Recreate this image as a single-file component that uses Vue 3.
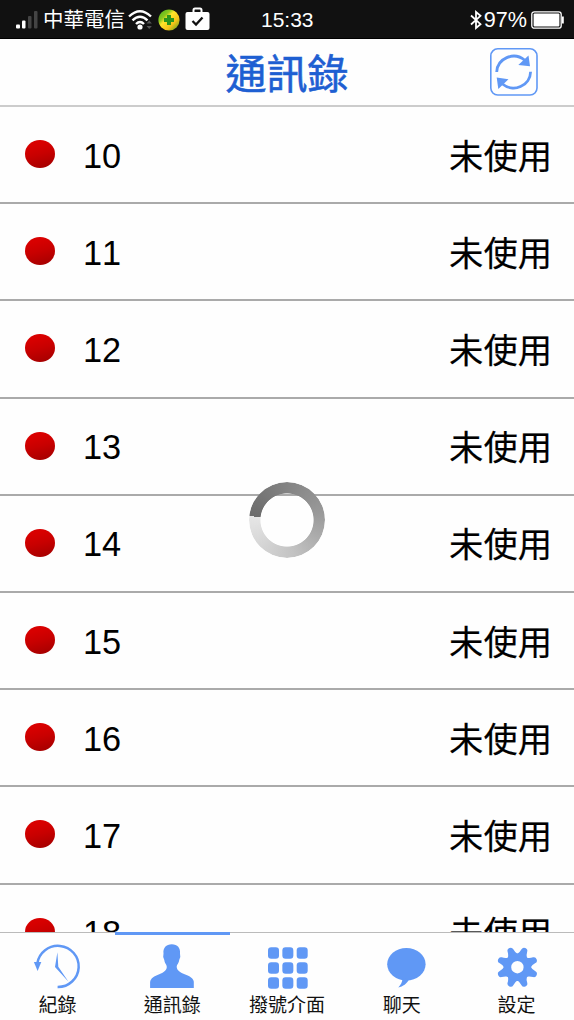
<template>
  <div class="phone">
    <div class="status">
      <svg class="signal" width="22" height="20" viewBox="0 0 22 20">
        <rect x="0" y="14.5" width="4" height="4" rx="1" fill="#fff" />
        <rect x="6" y="10.5" width="3.5" height="8" rx="1" fill="#fff" />
        <rect x="12" y="6" width="3.5" height="12.5" rx="1" fill="#444" />
        <rect x="18" y="1" width="3.5" height="17.5" rx="1" fill="#444" />
      </svg>
      <span class="carrier">中華電信</span>
      <svg class="wifi" width="26" height="22" viewBox="0 0 26 22">
        <g fill="none" stroke="#fff" stroke-width="2.4">
          <path d="M1 7.5Q12-3 23 7.5" />
          <path d="M4.5 11.4Q12 4 19.5 11.4" />
          <path d="M8 15Q12 11 16 15" />
        </g>
        <circle cx="12" cy="18" r="2.6" fill="#fff" />
        <path d="M18.500 14.500L21.200 11.500L23.900 14.500ZM18.500 17L21.200 20L23.900 17Z" fill="#555" />
      </svg>
      <svg class="shield" width="22" height="22" viewBox="0 0 22 22">
        <defs>
          <linearGradient id="ball" x1="0" y1="0" x2="1" y2="1">
            <stop offset="0" stop-color="#3fae1c" />
            <stop offset=".3" stop-color="#8cc81e" />
            <stop offset=".42" stop-color="#ffe52a" />
            <stop offset=".68" stop-color="#f6c318" />
            <stop offset="1" stop-color="#3c9f1c" />
          </linearGradient>
        </defs>
        <circle cx="11" cy="11" r="10.6" fill="url(#ball)" />
        <path d="M9 6h4v3h3v4h-3v3h-4v-3h-3v-4h3z" fill="#2c961b" />
      </svg>
      <svg class="bag" width="25" height="24" viewBox="0 0 25 24">
        <rect x=".5" y="5" width="24" height="18" rx="2" fill="#fff" />
        <path d="M8.5 6V3.2Q8.5 1.5 10 1.5H15Q16.5 1.5 16.5 3.2V6" fill="none" stroke="#fff" stroke-width="2" />
        <path d="M7.5 14L11 17.5L17.5 10.5" fill="none" stroke="#111" stroke-width="2.3" />
      </svg>
      <span class="clock">15:33</span>
      <div class="power">
        <svg width="12" height="20" viewBox="0 0 12 20">
          <path d="M1 5.5L10.5 14.2L6 18V2L10.5 5.8L1 14.5" fill="none" stroke="#fff" stroke-width="1.8" />
        </svg>
        <span class="percent">97%</span>
        <svg width="33" height="18" viewBox="0 0 33 18">
          <rect x=".8" y=".8" width="29.4" height="16.4" rx="2.5" fill="none" stroke="#fff" stroke-width="1.3" />
          <rect x="2.6" y="2.6" width="25.8" height="12.8" rx="1" fill="#fff" />
          <path d="M31 5.5h1.8v7h-1.8z" fill="#fff" />
        </svg>
      </div>
    </div>

    <header class="header">
      <h1>通訊錄</h1>
      <button class="refresh">
        <svg width="48" height="48" viewBox="0 0 48 48">
          <rect x=".8" y=".8" width="46.2" height="46.2" rx="7" fill="none" stroke="#6098f5" stroke-width="1.6" />
          <g fill="none" stroke="#6098f5" stroke-width="2.8">
            <path d="M6.7 24A17 16.5 0 0 1 34.5 12" />
            <path d="M40.6 23.8A17 16.5 0 0 1 12.5 36" />
          </g>
          <path d="M28.3 17L40 18.2L38.5 7.5ZM6.7 29.5L18.5 31.2L8.3 41Z" fill="#6098f5" />
        </svg>
      </button>
    </header>

    <main class="list">
      <div v-for="n in contacts" :key="n" class="row">
        <span class="dot"></span>
        <span class="number">{{ n }}</span>
        <span class="state">未使用</span>
      </div>
      <div class="spinner"></div>
    </main>

    <nav class="tabs">
      <div v-for="tab in tabs" :key="tab.icon" class="tab" :class="{ active: tab.icon === current }">
        <svg width="60" height="50" viewBox="0 0 60 50" fill="#6098f5">
          <template v-if="tab.icon === 'history'">
            <path d="M10.3 23.5A20.8 20.6 0 1 1 30.6 47" fill="none" stroke="#6098f5" stroke-width="2.5" />
            <path d="M6.9 22L14.3 22L10.6 31Z" />
            <path d="M30.4 12.3L28 27L41.5 41.7L31.3 26.7Z" />
          </template>
          <path
            v-else-if="tab.icon === 'contacts'"
            d="M29.8 4.2C35.5 4.2 38.6 8 38 13.5L38.3 17L37.2 20C36.8 23.5 34.8 24.5 34.7 27C35 31 39.5 33 44.5 35C49.5 37 51.8 39.5 51.8 42V48H8.1V42C8.1 39.5 10.5 37 15.5 35C20.5 33 24.6 31 24.8 27C24.7 24.5 22.7 23.5 22.3 20L21.2 17L21.5 13.5C20.9 8 24.1 4.2 29.8 4.2Z"
          />
          <template v-else-if="tab.icon === 'dial'">
            <rect v-for="i in 9" :key="i" :x="keyX(i)" :y="keyY(i)" width="11" height="11.5" rx="3.2" />
          </template>
          <template v-else-if="tab.icon === 'chat'">
            <ellipse cx="34.4" cy="24.2" rx="19.2" ry="16.2" />
            <path d="M30.5 38.5C30.5 42 28.5 45 26.3 47.5C31 46.5 35 43.5 37 39.5Z" />
          </template>
          <template v-else>
            <path
              v-for="i in 8"
              :key="i"
              d="M24.9 15.500Q27 12.500 27.300 9Q27.600 6.400 30.400 6.400Q33.200 6.400 33.500 9Q33.800 12.500 35.900 15.500Z"
              :transform="`rotate(${i * 45 - 22.5} 30.4 27.2)`"
            />
            <circle cx="30.4" cy="27.2" r="10" fill="none" stroke="#6098f5" stroke-width="7.6" />
          </template>
        </svg>
        <span class="label">{{ tab.label }}</span>
      </div>
    </nav>
  </div>
</template>

<script setup>
const contacts = [10, 11, 12, 13, 14, 15, 16, 17, 18]

const current = 'contacts'
const tabs = [
  { icon: 'history', label: '紀錄' },
  { icon: 'contacts', label: '通訊錄' },
  { icon: 'dial', label: '撥號介面' },
  { icon: 'chat', label: '聊天' },
  { icon: 'settings', label: '設定' }
]

// 3x3 dial pad
function keyX(i) {
  return 11 + ((i - 1) % 3) * 14.35
}
function keyY(i) {
  return 7.3 + Math.floor((i - 1) / 3) * 15
}
</script>

<style>
body { margin: 0; background: #fefefe; }
</style>

<style scoped>
.phone {
  width: 574px;
  height: 1020px;
  display: flex;
  flex-direction: column;
  overflow: hidden;
  background: #fefefe;
  color: #000;
  font-family: "Liberation Sans", "Noto Sans CJK TC", sans-serif;
  font-kerning: none;
}
.phone svg { display: block; flex: none; }

.status {
  height: 39px;
  flex: none;
  display: flex;
  align-items: center;
  box-sizing: border-box;
  padding: 1px 10px 0 16px;
  background: #111;
  border-bottom: 1px solid #000;
  color: #fff;
  font-size: 20px;
  line-height: 38px;
}
.carrier { width: 82px; margin-left: 5px; font-size: 20.5px; white-space: nowrap; }
.wifi { margin-left: 3px; }
.shield { margin-left: 4px; }
.bag { margin-left: 5px; margin-top: -1px; }
.clock { margin-left: 51px; font-size: 21px; }
.power { display: flex; align-items: center; margin-left: auto; }
.percent { margin: 0 4px 0 2px; font-size: 21.6px; }

.header {
  height: 68px;
  flex: none;
  box-sizing: border-box;
  display: grid;
  grid-template-columns: 1fr auto 1fr;
  align-items: center;
  border-bottom: 2px solid #ccc;
}
h1 {
  grid-column: 2;
  margin: 0;
  padding-top: 6px;
  color: #1e5fd2;
  font-size: 41px;
  font-weight: 400;
  line-height: 60px;
  -webkit-text-stroke: 0.6px;
}
.refresh { justify-self: end; margin: -1px 36px 0 0; padding: 0; border: 0; background: none; }

.list { position: relative; flex: 1; min-height: 0; overflow: hidden; }
.row {
  height: 97.2px;
  box-sizing: border-box;
  display: flex;
  align-items: center;
  padding: 2px 22px 0 25px;
  border-bottom: 2px solid #aaa;
  font-size: 34.3px;
}
.dot {
  width: 30px;
  height: 28px;
  margin-top: -3px;
  border-radius: 50%;
  background: linear-gradient(165deg, #d80000 20%, #c80000 50%, #a00000);
}
.number { margin: 1px 0 0 28px; }
.state { margin: -4px 0 0 auto; -webkit-text-stroke: 0.2px; }
.spinner {
  position: absolute;
  left: 249px;
  top: 374.5px;
  width: 76px;
  height: 76px;
  border-radius: 50%;
  background: conic-gradient(from 276deg, #6b6b6b, #858585 25%, #999 45%, #c2c2c2 70%, #e6e6e6 100%);
  mask: radial-gradient(circle, transparent 26.2px, #000 27px);
}

.tabs {
  height: 88px;
  flex: none;
  box-sizing: border-box;
  display: grid;
  grid-template-columns: repeat(5, 1fr);
  border-top: 1px solid #bbb;
}
.tab {
  display: flex;
  flex-direction: column;
  align-items: center;
  margin-top: -1px;
  padding-top: 5px;
  border-top: 3px solid transparent;
}
.tab.active { border-top-color: #6098f5; }
.label { margin-top: 2px; font-size: 19px; line-height: 28px; color: #111; white-space: nowrap; }
</style>
